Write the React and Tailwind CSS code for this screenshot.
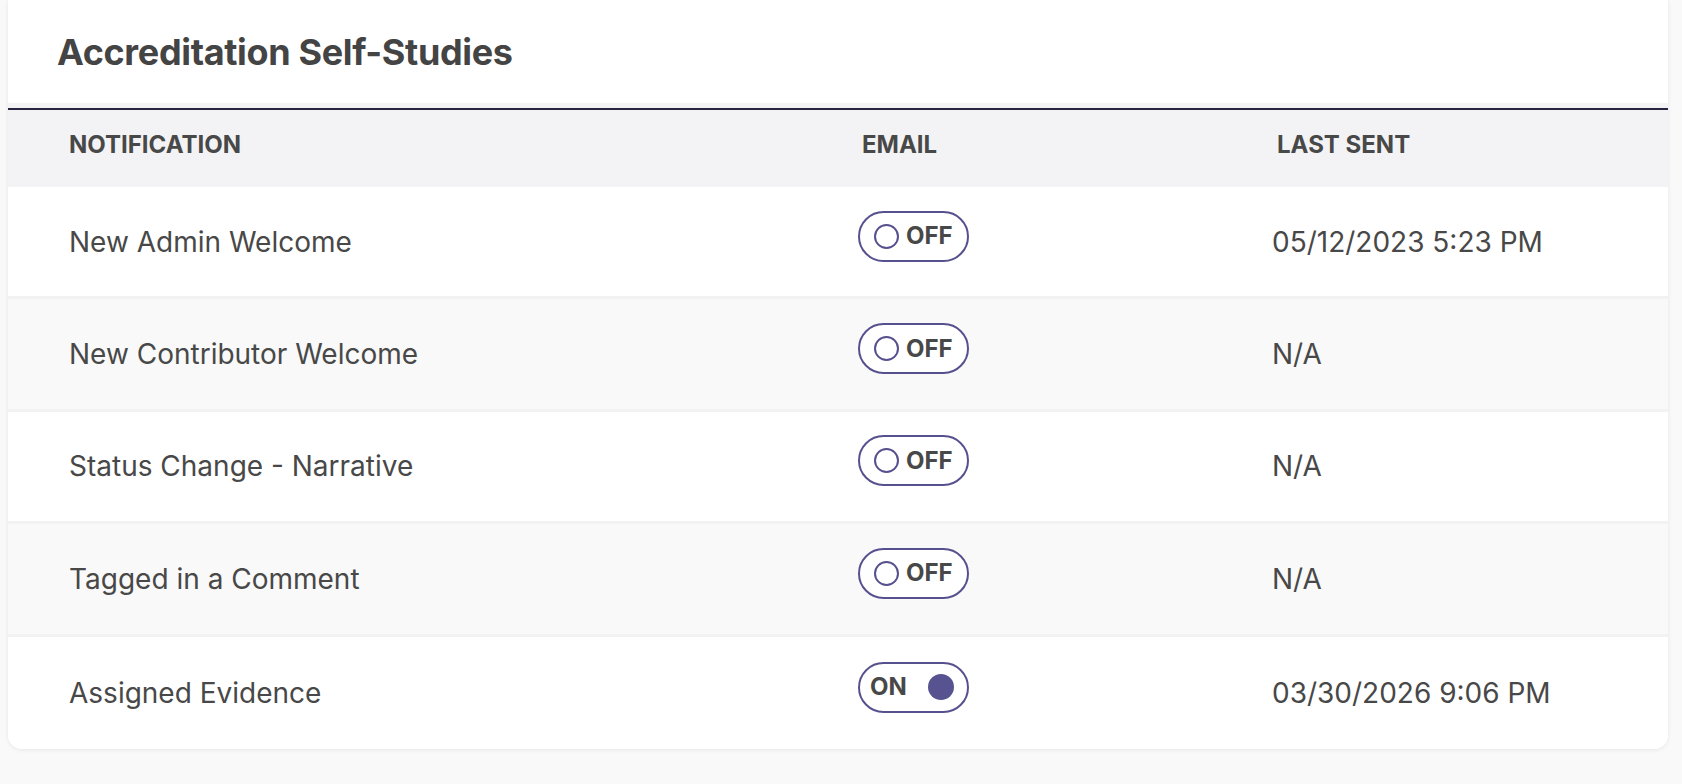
import React, { useState } from 'react';

const rows = [
  { name: 'New Admin Welcome', on: false, sent: '05/12/2023 5:23 PM' },
  { name: 'New Contributor Welcome', on: false, sent: 'N/A' },
  { name: 'Status Change - Narrative', on: false, sent: 'N/A' },
  { name: 'Tagged in a Comment', on: false, sent: 'N/A' },
  { name: 'Assigned Evidence', on: true, sent: '03/30/2026 9:06 PM' },
];

function Toggle({ on, onClick }) {
  return (
    <button
      onClick={onClick}
      className="flex items-center h-[51px] w-[111px] rounded-full border-[2.5px] border-[#56518e] bg-white"
    >
      {on ? (
        <>
          <span className="ml-[10px] text-[24px] font-bold text-[#484848] leading-none">ON</span>
          <span className="ml-auto mr-[13px] w-[26px] h-[26px] rounded-full bg-[#575390]" />
        </>
      ) : (
        <>
          <span className="ml-[14px] w-[25px] h-[25px] rounded-full border-2 border-[#56518e]" />
          <span className="ml-[7px] text-[24px] font-bold text-[#484848] leading-none">OFF</span>
        </>
      )}
    </button>
  );
}

export default function App() {
  const [items, setItems] = useState(rows);

  const toggle = (i) => {
    setItems(items.map((r, idx) => (idx === i ? { ...r, on: !r.on } : r)));
  };

  return (
    <div className="min-h-screen bg-[#f9f9f9] pl-[8px] pr-[14px] font-['Inter',sans-serif] text-[#484848]">
      <div className="bg-white rounded-b-[14px] shadow-[0_1px_4px_rgba(0,0,0,0.08)] overflow-hidden">
        {/* Title */}
        <div className="h-[103px] flex items-center pl-[49px]">
          <h2 className="text-[36px] font-bold tracking-[-0.35px] text-[#444] leading-none">Accreditation Self-Studies</h2>
        </div>

        {/* Header */}
        <div className="bg-[#f3f3f5] pt-[5px]">
          <div className="h-[2px] bg-[#2a2340]" />
          <div className="grid grid-cols-[789px_414px_1fr] pl-[61px] pb-[8px] h-[77px] items-center text-[24px] font-bold uppercase text-[#484848]">
            <div>Notification</div>
            <div className="pl-[4px]">Email</div>
            <div className="pl-[5px]">Last Sent</div>
          </div>
        </div>

        {/* Rows */}
        {items.map((r, i) => (
          <div
            key={r.name}
            className={`grid grid-cols-[789px_414px_1fr] pl-[61px] h-[112.4px] items-center text-[28px] ${
              i % 2 === 1 ? 'bg-[#f9f9f9]' : 'bg-white'
            } ${i < items.length - 1 ? 'border-b-[3px] border-[#f2f2f2]' : ''}`}
          >
            <div>{r.name}</div>
            <div className="-mt-[11px]">
              <Toggle on={r.on} onClick={() => toggle(i)} />
            </div>
            <div>{r.sent}</div>
          </div>
        ))}
      </div>
    </div>
  );
}
